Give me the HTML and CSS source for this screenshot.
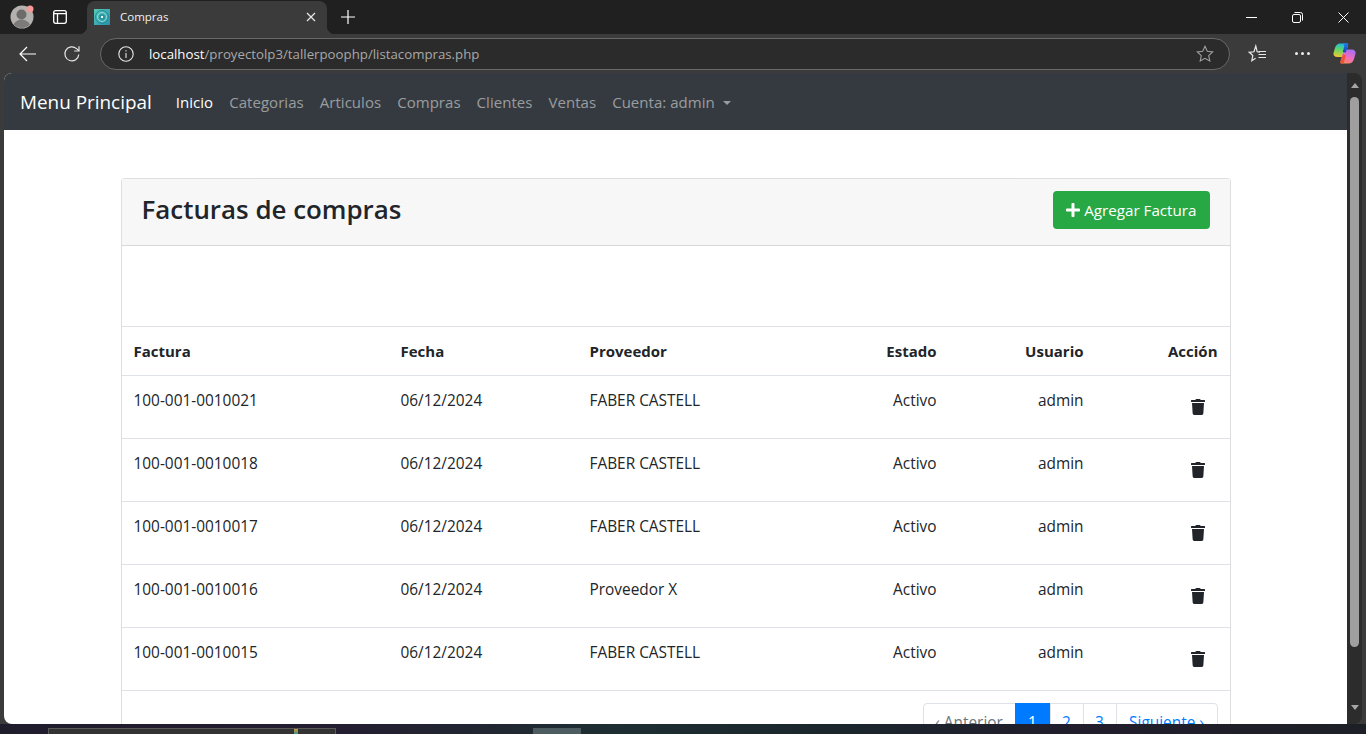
FILE: index.html
```html
<!doctype html>
<html lang="es">
<head>
	<meta charset="UTF-8">
	<meta name="viewport" content="width=device-width, initial-scale=1.0">
	<title>Compras</title>
	<link rel="stylesheet" href="styles.css">
</head>
<body>
	<!-- barra de pestañas -->
	<div class="tabstrip">
		<div class="avatar">
			<svg width="24" height="24" viewBox="0 0 24 24">
				<circle cx="12" cy="12" r="11.5" fill="#b4b1ae"/>
				<circle cx="11.5" cy="9.5" r="5" fill="#6e6c6a"/>
				<path d="M3.5 19.5c2-3.6 5-5 8-5s6.400 1.400 8.500 5a11.500 11.500 0 0 1-16.500 0z" fill="#7d7b79"/>
				<circle cx="20" cy="4" r="3.500" fill="#f59a97"/>
			</svg>
		</div>
		<div class="side-icon">
			<svg width="16" height="16" viewBox="0 0 16 16" fill="none" stroke="#fff" stroke-width="1.300">
				<rect x="1.700" y="1.700" width="12.600" height="12.600" rx="2"/>
				<path d="M1.700 4.700h12.600M5.500 4.700v9.600"/>
			</svg>
		</div>
		<div class="tab">
			<svg class="favicon" width="16" height="16" viewBox="0 0 16 16">
				<defs>
					<linearGradient id="favBg" x1="0" y1="0" x2="1" y2="1">
						<stop offset="0" stop-color="#56c8b4"/>
						<stop offset="1" stop-color="#2a8fb0"/>
					</linearGradient>
				</defs>
				<rect width="16" height="16" fill="url(#favBg)"/>
				<circle cx="8" cy="8" r="6.500" fill="none" stroke="#1f8f9c" stroke-width="1"/>
				<circle cx="8" cy="8" r="4.500" fill="none" stroke="#8fdcd2" stroke-width="1"/>
				<circle cx="8" cy="8" r="2.800" fill="#1f8f9c"/>
				<circle cx="8" cy="8" r="1.200" fill="#fff"/>
			</svg>
			<span class="tab-title">Compras</span>
			<svg class="tab-close" width="10" height="10" viewBox="0 0 10 10" stroke="#e8e8e8" stroke-width="1.200">
				<path d="M1 1l8 8M9 1l-8 8"/>
			</svg>
		</div>
		<svg class="new-tab" width="14" height="14" viewBox="0 0 14 14" stroke="#fff" stroke-width="1.200">
			<path d="M7 0v14M0 7h14"/>
		</svg>
		<div class="win-controls">
			<span class="win-btn">
				<svg width="11" height="11" viewBox="0 0 11 11" stroke="#fff"><path d="M0 5.500h11"/></svg>
			</span>
			<span class="win-btn">
				<svg width="11" height="11" viewBox="0 0 11 11" fill="none" stroke="#fff">
					<rect x="0.500" y="2.500" width="8" height="8" rx="1.500"/>
					<path d="M2.500 0.500h6a2 2 0 0 1 2 2v6"/>
				</svg>
			</span>
			<span class="win-btn">
				<svg width="11" height="11" viewBox="0 0 11 11" stroke="#fff"><path d="M0.500 0.500l10 10M10.500 0.500l-10 10"/></svg>
			</span>
		</div>
	</div>

	<!-- barra de direcciones -->
	<div class="toolbar">
		<span class="tool-btn back">
			<svg width="18" height="16" viewBox="0 0 18 16" fill="none" stroke="#fff" stroke-width="1.200">
				<path d="M17 8H1M8 1L1 8l7 7"/>
			</svg>
		</span>
		<span class="tool-btn reload">
			<svg width="18" height="18" viewBox="0 0 18 18" fill="none" stroke="#e6e6e6" stroke-width="1.200">
				<path d="M15.800 9.500A7 7 0 1 1 13.500 3.600L16 5.800"/>
				<path d="M16 1.200v4.800h-4.800"/>
			</svg>
		</span>
		<div class="address">
			<svg class="info" width="16" height="16" viewBox="0 0 16 16" fill="none" stroke="#e8e8e8" stroke-width="1.100">
				<circle cx="8" cy="8" r="7.200"/>
				<path d="M8 7v5M8 4.200v1.300"/>
			</svg>
			<span class="url"><b>localhost</b>/proyectolp3/tallerpoophp/listacompras.php</span>
			<svg width="18" height="18" viewBox="0 0 18 18" fill="none" stroke="#a0a0a0" stroke-width="1.100">
				<path d="M9 1.300l2.300 5 5.400.600-4 3.700 1.100 5.400L9 13.300 4.200 16l1.100-5.400-4-3.700 5.400-.600z"/>
			</svg>
		</div>
		<span class="tool-btn fav">
			<svg width="20" height="20" viewBox="0 0 20 20" fill="none" stroke="#e8e8e8" stroke-width="1.200">
				<path d="M12 8.200l-2.800-.400L7.800 2 6 7.800l-4.700.500 3.500 3.200-1 5.300 3.800-2.500"/>
				<path d="M10.500 7.500h7.500M10.500 10.500h7.500M10.500 13.500h7.500"/>
			</svg>
		</span>
		<span class="tool-btn dots"><i></i><i></i><i></i></span>
		<span class="tool-btn copilot">
			<svg width="23" height="21" viewBox="0 0 23 21">
				<defs>
					<linearGradient id="copA" x1="0.500" y1="0" x2="0.300" y2="1">
						<stop offset="0" stop-color="#1fb8e0"/>
						<stop offset="0.450" stop-color="#5fd86a"/>
						<stop offset="1" stop-color="#f3c92e"/>
					</linearGradient>
					<linearGradient id="copB" x1="0.700" y1="0" x2="0.300" y2="1">
						<stop offset="0" stop-color="#a56ff0"/>
						<stop offset="0.550" stop-color="#ee6cc4"/>
						<stop offset="1" stop-color="#fb8a5a"/>
					</linearGradient>
					<linearGradient id="copC" x1="0" y1="0" x2="0" y2="1">
						<stop offset="0" stop-color="#1d7df0"/>
						<stop offset="1" stop-color="#1a3fae"/>
					</linearGradient>
				</defs>
				<path d="M7 0.500h7c1 0 1.400.800 1.100 1.700L11.500 14H4.500C1.500 14 0 12.200 0.500 10L2 5C3 2 4.500 0.500 7 0.500z" fill="url(#copA)"/>
				<path d="M11 6.500h7.500c2.800 0 4.500 1.800 4 4.200L21 16c-.900 3-2.700 4.500-5.500 4.500H8.500c-1 0-1.400-.800-1.100-1.700z" fill="url(#copB)"/>
				<path d="M9.500 0.500H14c1 0 1.400.800 1.100 1.700L12.800 9.500 9.800 9l1.400-5.500c.300-1.500-.300-2.500-1.700-3z" fill="url(#copC)"/>
				<path d="M7.400 18.800L10.200 11l2.600 1.500-1.800 6.500c-.300 1-1 1.500-2.500 1.500H8.500c-1 0-1.400-.800-1.100-1.700z" fill="#ef5236"/>
			</svg>
		</span>
	</div>

	<!-- ventana del navegador -->
	<div class="viewport">
		<div class="page">
			<nav class="navbar">
				<a class="brand" href="#">Menu Principal</a>
				<ul class="nav-links">
					<li><a class="active" href="#">Inicio</a></li>
					<li><a href="#">Categorias</a></li>
					<li><a href="#">Articulos</a></li>
					<li><a href="#">Compras</a></li>
					<li><a href="#">Clientes</a></li>
					<li><a href="#">Ventas</a></li>
					<li><a class="dropdown" href="#">Cuenta: admin</a></li>
				</ul>
			</nav>

			<div class="container">
				<div class="card">
					<div class="card-header">
						<h3>Facturas de compras</h3>
						<a class="btn-add" href="#">
							<svg width="14" height="16" viewBox="0 0 448 512" fill="#fff"><path d="M416 208H272V64c0-17.670-14.330-32-32-32h-32c-17.670 0-32 14.330-32 32v144H32c-17.670 0-32 14.330-32 32v32c0 17.670 14.330 32 32 32h144v144c0 17.670 14.330 32 32 32h32c17.670 0 32-14.330 32-32V304h144c17.670 0 32-14.330 32-32v-32c0-17.670-14.330-32-32-32z"/></svg>
							Agregar Factura
						</a>
					</div>
					<div class="card-spacer"></div>
					<table class="table">
						<colgroup>
							<col class="col-factura">
							<col class="col-fecha">
							<col class="col-proveedor">
							<col class="col-estado">
							<col class="col-usuario">
							<col class="col-accion">
						</colgroup>
						<thead>
							<tr>
								<th>Factura</th>
								<th>Fecha</th>
								<th>Proveedor</th>
								<th class="right">Estado</th>
								<th class="right">Usuario</th>
								<th class="right">Acción</th>
							</tr>
						</thead>
						<tbody>
							<tr>
								<td>100-001-0010021</td>
								<td>06/12/2024</td>
								<td>FABER CASTELL</td>
								<td class="right">Activo</td>
								<td class="right">admin</td>
								<td class="right action"><a class="btn-del" href="#"><svg width="14" height="16" viewBox="0 0 448 512" fill="#212529"><path d="M432 32H312l-9.400-18.700A24 24 0 0 0 281.100 0H166.800a23.720 23.720 0 0 0-21.400 13.300L136 32H16A16 16 0 0 0 0 48v32a16 16 0 0 0 16 16h416a16 16 0 0 0 16-16V48a16 16 0 0 0-16-16zM53.200 467a48 48 0 0 0 47.900 45h245.800a48 48 0 0 0 47.900-45L416 128H32z"/></svg></a></td>
							</tr>
							<tr>
								<td>100-001-0010018</td>
								<td>06/12/2024</td>
								<td>FABER CASTELL</td>
								<td class="right">Activo</td>
								<td class="right">admin</td>
								<td class="right action"><a class="btn-del" href="#"><svg width="14" height="16" viewBox="0 0 448 512" fill="#212529"><path d="M432 32H312l-9.400-18.700A24 24 0 0 0 281.100 0H166.800a23.720 23.720 0 0 0-21.400 13.300L136 32H16A16 16 0 0 0 0 48v32a16 16 0 0 0 16 16h416a16 16 0 0 0 16-16V48a16 16 0 0 0-16-16zM53.200 467a48 48 0 0 0 47.900 45h245.800a48 48 0 0 0 47.900-45L416 128H32z"/></svg></a></td>
							</tr>
							<tr>
								<td>100-001-0010017</td>
								<td>06/12/2024</td>
								<td>FABER CASTELL</td>
								<td class="right">Activo</td>
								<td class="right">admin</td>
								<td class="right action"><a class="btn-del" href="#"><svg width="14" height="16" viewBox="0 0 448 512" fill="#212529"><path d="M432 32H312l-9.400-18.700A24 24 0 0 0 281.100 0H166.800a23.720 23.720 0 0 0-21.400 13.300L136 32H16A16 16 0 0 0 0 48v32a16 16 0 0 0 16 16h416a16 16 0 0 0 16-16V48a16 16 0 0 0-16-16zM53.200 467a48 48 0 0 0 47.900 45h245.800a48 48 0 0 0 47.900-45L416 128H32z"/></svg></a></td>
							</tr>
							<tr>
								<td>100-001-0010016</td>
								<td>06/12/2024</td>
								<td>Proveedor X</td>
								<td class="right">Activo</td>
								<td class="right">admin</td>
								<td class="right action"><a class="btn-del" href="#"><svg width="14" height="16" viewBox="0 0 448 512" fill="#212529"><path d="M432 32H312l-9.400-18.700A24 24 0 0 0 281.100 0H166.800a23.720 23.720 0 0 0-21.400 13.300L136 32H16A16 16 0 0 0 0 48v32a16 16 0 0 0 16 16h416a16 16 0 0 0 16-16V48a16 16 0 0 0-16-16zM53.200 467a48 48 0 0 0 47.900 45h245.800a48 48 0 0 0 47.900-45L416 128H32z"/></svg></a></td>
							</tr>
							<tr>
								<td>100-001-0010015</td>
								<td>06/12/2024</td>
								<td>FABER CASTELL</td>
								<td class="right">Activo</td>
								<td class="right">admin</td>
								<td class="right action"><a class="btn-del" href="#"><svg width="14" height="16" viewBox="0 0 448 512" fill="#212529"><path d="M432 32H312l-9.400-18.700A24 24 0 0 0 281.100 0H166.800a23.720 23.720 0 0 0-21.400 13.300L136 32H16A16 16 0 0 0 0 48v32a16 16 0 0 0 16 16h416a16 16 0 0 0 16-16V48a16 16 0 0 0-16-16zM53.200 467a48 48 0 0 0 47.900 45h245.800a48 48 0 0 0 47.900-45L416 128H32z"/></svg></a></td>
							</tr>
						</tbody>
					</table>
					<ul class="pagination">
						<li class="disabled w-prev"><a href="#">‹ Anterior</a></li>
						<li class="current w-one"><a href="#">1</a></li>
						<li class="w-num"><a href="#">2</a></li>
						<li class="w-num"><a href="#">3</a></li>
						<li class="w-next"><a href="#">Siguiente ›</a></li>
					</ul>
				</div>
			</div>
		</div>
		<div class="scrollbar">
			<i class="arrow-up"></i>
			<div class="thumb"></div>
			<i class="arrow-down"></i>
		</div>
	</div>

	<!-- escritorio que asoma debajo -->
	<div class="desktop">
		<div class="peek"><i></i></div>
		<div class="peek-small"></div>
	</div>
</body>
</html>
```

FILE: styles.css
```css
* {
	box-sizing: border-box;
}

html, body {
	height: 100%;
}

body {
	display: flex;
	flex-direction: column;
	margin: 0;
	overflow: hidden;
	background-color: #3b3b3b;
	font: 400 15.4px/24px "Open Sans", "Noto Sans", sans-serif;
	color: #212529;
}

ul {
	margin: 0;
	padding: 0;
	list-style: none;
}

a {
	text-decoration: none;
}

svg {
	display: block;
}


/* tabstrip */
.tabstrip {
	display: flex;
	align-items: center;
	flex: none;
	height: 34px;
	background-color: #202020;
}

.avatar {
	margin-left: 10px;
}

.side-icon {
	margin-left: 18px;
}

.tab {
	position: relative;
	display: flex;
	align-items: center;
	align-self: flex-end;
	margin-left: 19px;
	padding: 0 11px 1px 7px;
	width: 240px;
	height: 33px;
	background-color: #3b3b3b;
	border-radius: 8px 8px 0 0;
}

.tab::before,
.tab::after {
	position: absolute;
	bottom: 0;
	content: "";
	width: 8px;
	height: 8px;
}

.tab::before {
	left: -8px;
	background: radial-gradient(circle at 0 0, #202020 8px, #3b3b3b 8.5px);
}

.tab::after {
	right: -8px;
	background: radial-gradient(circle at 100% 0, #202020 8px, #3b3b3b 8.5px);
}

.tab-title {
	flex: 1;
	margin-left: 10px;
	font-size: 11.5px;
	color: #f0f0f0;
}

.new-tab {
	margin-left: 14px;
}

.win-controls {
	display: flex;
	margin-left: auto;
}

.win-btn {
	display: flex;
	align-items: center;
	justify-content: center;
	width: 46px;
	height: 34px;
}


/* toolbar */
.toolbar {
	display: flex;
	align-items: center;
	flex: none;
	height: 39px;
}

.tool-btn {
	display: flex;
	align-items: center;
	justify-content: center;
}

.back {
	margin-left: 19px;
	width: 18px;
}

.reload {
	margin-left: 26px;
	width: 18px;
}

.address {
	display: flex;
	align-items: center;
	margin-left: 19px;
	padding: 0 15px 0 17px;
	width: 1130px;
	height: 32px;
	background-color: #2b2b2b;
	border: 1px solid #686868;
	border-radius: 16px;
}

.url {
	flex: 1;
	margin-left: 15px;
	font-size: 13.25px;
	color: #a8a8a8;
}

.url b {
	font-weight: 400;
	color: #fff;
}

.fav {
	margin-left: 18px;
	width: 20px;
}

.dots {
	gap: 3px;
	margin-left: 12px;
	width: 44px;
}

.dots i {
	width: 3px;
	height: 3px;
	background-color: #eee;
	border-radius: 50%;
}

.copilot {
	margin-left: 8px;
	width: 24px;
}


/* viewport */
.viewport {
	display: flex;
	flex: 1;
	min-height: 0;
	margin: 0 4px;
	overflow: hidden;
	background-color: #2c2c2c;
	border-radius: 8px;
}

.page {
	flex: 1;
	min-width: 0;
	overflow: hidden;
	background-color: #fff;
}

.scrollbar {
	display: flex;
	flex-direction: column;
	align-items: center;
	flex: none;
	padding-top: 10px;
	width: 15px;
}

.arrow-up,
.arrow-down {
	width: 0;
	height: 0;
	border-left: 4.5px solid transparent;
	border-right: 4.5px solid transparent;
}

.arrow-up {
	border-bottom: 5px solid #a6a6a6;
}

.arrow-down {
	margin-top: 58px;
	border-top: 5px solid #a6a6a6;
}

.thumb {
	flex: none;
	margin-top: 9px;
	width: 9px;
	height: 550px;
	background-color: #9f9f9f;
	border-radius: 5px;
}


/* navbar */
.navbar {
	display: flex;
	align-items: center;
	padding: 8px 16px;
	height: 57px;
	background-color: #343a40;
}

.brand {
	margin-right: 16px;
	font-size: 18.9px;
	line-height: 30px;
	color: #fff;
}

.nav-links {
	display: flex;
	font-size: 15px;
	letter-spacing: .04px;
}

.nav-links a {
	display: block;
	padding: 8px;
	color: rgba(255, 255, 255, .5);
}

.nav-links a.active {
	color: #fff;
}

.dropdown::after {
	display: inline-block;
	margin-left: 8px;
	vertical-align: 3px;
	content: "";
	border-top: 4.8px solid;
	border-left: 4.8px solid transparent;
	border-right: 4.8px solid transparent;
}


/* card */
.container {
	margin: 48px auto 0;
	padding: 0 15px;
	width: 1140px;
}

.card {
	background-color: #fff;
	border: 1px solid rgba(0, 0, 0, .125);
	border-bottom: 0;
	border-radius: 4px 4px 0 0;
}

.card-header {
	display: flex;
	justify-content: space-between;
	padding: 12px 20px;
	height: 67px;
	background-color: #f7f7f7;
	border-bottom: 1px solid rgba(0, 0, 0, .125);
}

.card-header h3 {
	margin: 0;
	font-size: 25.9px;
	font-weight: 600;
	line-height: 36px;
}

.btn-add {
	display: flex;
	align-items: center;
	gap: 4px;
	padding: 0 13px;
	height: 38px;
	font-size: 15.2px;
	color: #fff;
	background-color: #28a745;
	border-radius: 4px;
}

.card-spacer {
	height: 80px;
}


/* table */
.table {
	width: 100%;
	table-layout: fixed;
	border-collapse: collapse;
}

.col-factura { width: 267px; }
.col-fecha { width: 189px; }
.col-proveedor { width: 260px; }
.col-estado { width: 111px; }
.col-usuario { width: 147px; }
.col-accion { width: 134px; }

.table th,
.table td {
	padding: 12px;
	text-align: left;
	vertical-align: top;
	border-top: 1px solid #dee2e6;
}

.table td {
	padding: 13px 12px 11px;
}

.table th {
	font-size: 15px;
	font-weight: 700;
}

.table .right {
	text-align: right;
}

.table td.action {
	padding: 12px;
}

.table tbody tr:last-child td {
	border-bottom: 1px solid #dee2e6;
}

.btn-del {
	display: inline-flex;
	align-items: center;
	justify-content: center;
	width: 40px;
	height: 38px;
	vertical-align: top;
}


/* pagination */
.pagination {
	display: flex;
	justify-content: flex-end;
	margin: 12px 12px 0 0;
}

.pagination li {
	height: 38px;
	text-align: center;
	background-color: #fff;
	border: 1px solid #dee2e6;
	margin-left: -1px;
}

.pagination a {
	display: block;
	padding: 7px 0 5px;
	color: #007bff;
}

.w-prev { width: 93px; border-radius: 4px 0 0 4px; }
.w-one { width: 36px; }
.w-num { width: 34px; }
.w-next { width: 102px; border-radius: 0 4px 4px 0; }

.pagination .disabled a {
	color: #6c757d;
}

.pagination .current {
	background-color: #007bff;
	border-color: #007bff;
}

.pagination .current a {
	color: #fff;
}


/* desktop strip */
.desktop {
	display: flex;
	align-items: flex-end;
	flex: none;
	height: 10px;
	padding-left: 48px;
	background: linear-gradient(90deg, #1f1c2c 0%, #241e30 25%, #1e2e33 45%, #1a262c 60%, #221d2c 80%, #1c2026 100%);
}

.peek {
	display: flex;
	justify-content: flex-end;
	width: 288px;
	height: 6px;
	padding-right: 37px;
	background-color: #333;
	border: 1px solid #5a5a5a;
	border-bottom: 0;
}

.peek i {
	width: 4px;
	height: 5px;
	background: linear-gradient(#c49a3a, #3f8f8a);
}

.peek-small {
	margin-left: 197px;
	width: 48px;
	height: 6px;
	background-color: #4d5c60;
}
```
